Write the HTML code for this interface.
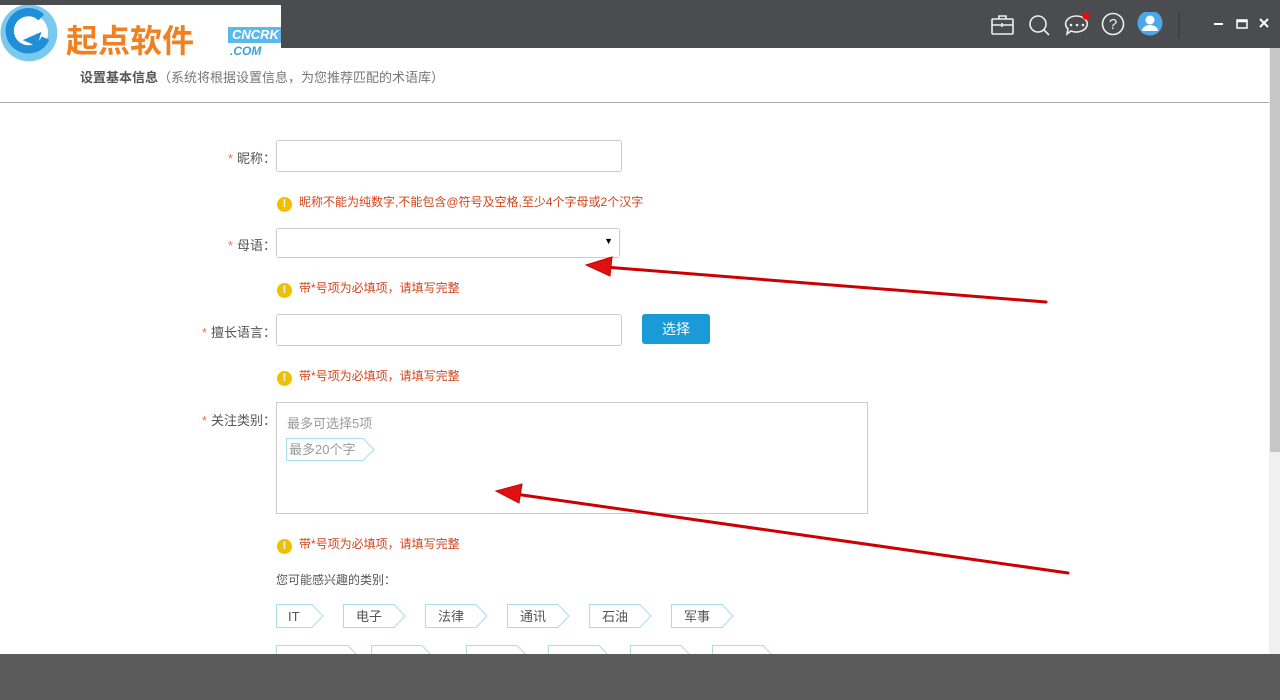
<!DOCTYPE html>
<html><head><meta charset="utf-8"><style>
*{margin:0;padding:0;box-sizing:border-box}
body{width:1280px;height:700px;overflow:hidden;background:#fff;font-family:"Liberation Sans","Noto Sans CJK SC",sans-serif;position:relative;font-size:13px;color:#555}
.top{position:absolute;left:0;top:0;width:1280px;height:48px;background:#4a4c50}
.logo{position:absolute;left:0;top:5px;width:281px;height:43px;background:#fff}
.abs{position:absolute}
.lbl{position:absolute;font-size:13px;color:#555;text-align:right;width:92px;white-space:nowrap}
.lbl b{color:#e8704a;font-weight:normal;margin-right:4px}
.inp{position:absolute;border:1px solid #ccc;border-radius:3px;background:#fff}
.warn{position:absolute;font-size:12px;color:#d0451b;left:277px}
.warn i{display:inline-block;width:15px;height:15px;border-radius:50%;background:#f0c000;color:#fff;font-style:normal;font-weight:bold;font-size:11px;text-align:center;line-height:15px;margin-right:7px;vertical-align:-1px}
</style></head><body>
<div class="top"></div>
<div class="logo">
<svg width="62" height="62" style="position:absolute;left:0;top:0" viewBox="0 0 60 60"><circle cx="28" cy="27" r="23" fill="none" stroke="#7cc9ee" stroke-width="9"/><path d="M40 12 A18 18 0 1 0 44 32" fill="none" stroke="#1e8fd8" stroke-width="8"/><path d="M22 34 L40 26 L36 40 Z" fill="#1e8fd8"/></svg>
<span class="abs" style="left:66px;top:18px;font-size:32px;font-weight:bold;color:#f08020;letter-spacing:0px;line-height:36px">起点软件</span>
<span class="abs" style="left:228px;top:22px;width:53px;height:16px;background:#5ab8ee;color:#fff;font-size:13px;font-weight:bold;font-style:italic;line-height:16px;padding-left:4px">CNCRK</span>
<span class="abs" style="left:230px;top:39px;font-size:12px;font-weight:bold;font-style:italic;color:#3aa0e0">.COM</span>
</div>
<svg class="abs" style="left:990px;top:12px" width="280" height="28" viewBox="0 0 280 28">
<g fill="none" stroke="#eee" stroke-width="1.6">
<rect x="2" y="7" width="21" height="15" rx="1"/><path d="M9 7V4h7v3M2 13h21M12 11v4"/>
<circle cx="48" cy="12" r="8"/><path d="M54 18l5 5"/>
<path d="M87 4a11 8 0 1 1 -6 15l-4 3 1-5a11 8 0 0 1 9-13z"/>
<circle cx="123" cy="12" r="10.5"/>
</g>
<circle cx="81" cy="13" r="1.3" fill="#eee"/><circle cx="87" cy="13" r="1.3" fill="#eee"/><circle cx="93" cy="13" r="1.3" fill="#eee"/>
<circle cx="96" cy="4" r="3.5" fill="#f00"/>
<text x="123" y="17" fill="#eee" font-size="15" text-anchor="middle" font-family="Liberation Sans">?</text>
<circle cx="160" cy="11" r="12.5" fill="#4aa8e8"/><circle cx="160" cy="8" r="4.5" fill="#fff"/><path d="M152 19a8 6 0 0 1 16 0z" fill="#fff"/>
<line x1="189" y1="1" x2="189" y2="26" stroke="#333" stroke-width="1"/>
<path d="M224 12h9" stroke="#fff" stroke-width="2"/>
<rect x="247" y="8" width="10" height="8" fill="none" stroke="#fff" stroke-width="1.5"/><path d="M247 9h10" stroke="#fff" stroke-width="2.5"/>
<path d="M270 7l8 8M278 7l-8 8" stroke="#fff" stroke-width="2"/>
</svg>
<div class="abs" style="left:80px;top:67px;font-size:13px;color:#777"><b style="color:#555">设置基本信息</b>（系统将根据设置信息，为您推荐匹配的术语库）</div>
<div class="abs" style="left:0;top:102px;width:1269px;height:1px;background:#aaa"></div>
<div class="abs" style="left:1269px;top:48px;width:11px;height:606px;background:#f0f0f0"></div>
<div class="abs" style="left:1270px;top:48px;width:10px;height:404px;background:#c6c6c6"></div>

<div class="lbl" style="left:184px;top:148px"><b>*</b>昵称：</div>
<div class="inp" style="left:276px;top:140px;width:346px;height:32px"></div>
<div class="warn" style="top:193px"><i>!</i>昵称不能为纯数字,不能包含@符号及空格,至少4个字母或2个汉字</div>
<div class="lbl" style="left:184px;top:235px"><b>*</b>母语：</div>
<div class="inp" style="left:276px;top:228px;width:344px;height:30px"><span class="abs" style="right:6px;top:7px;font-size:9px;color:#000">▼</span></div>
<div class="warn" style="top:279px"><i>!</i>带*号项为必填项，请填写完整</div>
<div class="lbl" style="left:184px;top:322px"><b>*</b>擅长语言：</div>
<div class="inp" style="left:276px;top:314px;width:346px;height:32px"></div>
<div class="abs" style="left:642px;top:314px;width:68px;height:30px;background:#1a9ad6;border-radius:3px;color:#fff;font-size:14px;text-align:center;line-height:30px">选择</div>
<div class="warn" style="top:367px"><i>!</i>带*号项为必填项，请填写完整</div>
<div class="lbl" style="left:184px;top:410px"><b>*</b>关注类别：</div>
<div class="inp" style="left:276px;top:402px;width:592px;height:112px;border-radius:0"></div>
<div class="abs" style="left:287px;top:413px;font-size:13px;color:#999">最多可选择5项</div>
<svg class="abs" style="left:286px;top:438px" width="90" height="24"><path d="M0.5 0.5H77L88 11.5 77 22.5H0.5Z" fill="none" stroke="#a9dde8"/><text x="3" y="16" font-size="13" fill="#999" font-family="Liberation Sans,Noto Sans CJK SC">最多20个字</text></svg>
<div class="warn" style="top:535px"><i>!</i>带*号项为必填项，请填写完整</div>
<div class="abs" style="left:276px;top:571px;font-size:12px;color:#555">您可能感兴趣的类别：</div>
<svg class="abs" style="left:276px;top:604px" width="520" height="60" font-family="Liberation Sans,Noto Sans CJK SC" font-size="13" fill="#555">
<g fill="none" stroke="#a9dde8">
<path d="M0.5 0.5H36L47 12 36 23.5H0.5Z"/>
<path d="M67.5 0.5H118L129 12 118 23.5H67.5Z"/>
<path d="M149.5 0.5H200L211 12 200 23.5H149.5Z"/>
<path d="M231.5 0.5H282L293 12 282 23.5H231.5Z"/>
<path d="M313.5 0.5H364L375 12 364 23.5H313.5Z"/>
<path d="M395.5 0.5H446L457 12 446 23.5H395.5Z"/>
<path d="M0.5 41.5H72L83 53 72 64H0.5Z"/>
<path d="M95.5 41.5H146L157 53 146 64H95.5Z"/>
<path d="M190.5 41.5H241L252 53 241 64H190.5Z"/>
<path d="M272.5 41.5H323L334 53 323 64H272.5Z"/>
<path d="M354.5 41.5H405L416 53 405 64H354.5Z"/>
<path d="M436.5 41.5H487L498 53 487 64H436.5Z"/>
</g>
<text x="12" y="17">IT</text><text x="80" y="17">电子</text><text x="162" y="17">法律</text><text x="244" y="17">通讯</text><text x="326" y="17">石油</text><text x="408" y="17">军事</text>
</svg>
<div class="abs" style="left:0;top:654px;width:1280px;height:46px;background:#5b5b5b"></div>
<svg class="abs" style="left:0;top:0" width="1280" height="700"><g fill="#e01010" stroke="#c00" stroke-width="3" stroke-linecap="round">
<line x1="1046" y1="302" x2="605" y2="267"/><path d="M586 265L612 257 610 276Z" stroke-width="1"/>
<line x1="1068" y1="573" x2="515" y2="494"/><path d="M496 491L522 484 519 503Z" stroke-width="1"/>
</g></svg>
</body></html>
